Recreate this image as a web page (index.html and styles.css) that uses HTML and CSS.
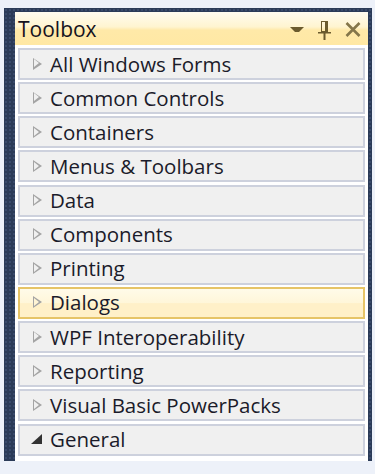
FILE: index.html
```html
<!DOCTYPE html>
<html lang="en">
<head>
    <meta charset="UTF-8">
    <meta name="viewport" content="width=device-width, initial-scale=1.0">
    <title>Toolbox</title>
    <link rel="stylesheet" href="styles.css">
</head>
<body>
    <div class="frame">
        <div class="panel">
            <div class="header">
                <span class="title">Toolbox</span>
                <div class="tools">
                    <svg class="icon-menu" width="14" height="6" viewBox="0 0 14 6">
                        <polygon points="0,0 14,0 9,5 5,5" fill="#6b5b2e"/>
                    </svg>
                    <svg class="icon-pin" width="13" height="19" viewBox="0 0 13 19">
                        <rect x="3.5" y="0.5" width="6" height="10" fill="none" stroke="#6b5b2e"/>
                        <rect x="7" y="1" width="2" height="10" fill="#6b5b2e"/>
                        <rect x="0" y="11" width="13" height="1.5" fill="#6b5b2e"/>
                        <rect x="5.5" y="12" width="2" height="7" fill="#6b5b2e"/>
                    </svg>
                    <svg class="icon-close" width="16" height="15" viewBox="0 0 16 15">
                        <path d="M1.5 1 L14.5 14 M14.5 1 L1.5 14" stroke="#85764a" stroke-width="2.6"/>
                    </svg>
                </div>
            </div>

            <ul class="groups">
                <li class="group"><span class="arrow"></span>All Windows Forms</li>
                <li class="group"><span class="arrow"></span>Common Controls</li>
                <li class="group"><span class="arrow"></span>Containers</li>
                <li class="group"><span class="arrow"></span>Menus &amp; Toolbars</li>
                <li class="group"><span class="arrow"></span>Data</li>
                <li class="group"><span class="arrow"></span>Components</li>
                <li class="group"><span class="arrow"></span>Printing</li>
                <li class="group group-hover"><span class="arrow"></span>Dialogs</li>
                <li class="group"><span class="arrow"></span>WPF Interoperability</li>
                <li class="group"><span class="arrow"></span>Reporting</li>
                <li class="group"><span class="arrow"></span>Visual Basic PowerPacks</li>
                <li class="group"><span class="arrow arrow-open"></span>General</li>
            </ul>
        </div>
    </div>
</body>
</html>
```

FILE: styles.css
```css
body {
    margin: 0;
    background-color: #edf1f9;
    font-family: "Open Sans", "Noto Sans", Arial, sans-serif;
    color: #1b1b2a;
}
.frame {
    margin: 8px 0 0 4px;
    width: 353px;
    padding: 4px 4px 0 11px;
    background-color: #2b3b58;
    background-image: radial-gradient(circle, #3a4b6c 0.8px, transparent 1px);
    background-size: 4px 4px;
}
.panel {
    height: 449px;
    background-color: white;
}
.header {
    height: 33px;
    display: flex;
    align-items: center;
    justify-content: space-between;
    padding: 0 7px 0 3px;
    background: linear-gradient(#fffcf0 0%, #fff4d0 45%, #ffe9a8 55%, #ffe8a4 100%);
}
.title {
    font-size: 21px;
    color: #14121e;
}
.tools {
    display: flex;
    align-items: center;
    gap: 14px;
}
.icon-menu {
    margin-top: 2px;
}
.icon-pin {
    margin-top: 3px;
}
.icon-close {
    margin-top: 1px;
}
.groups {
    list-style: none;
    margin: 0;
    padding: 3px 3px 0 3px;
    display: grid;
    gap: 2.15px;
}
.group {
    height: 27px;
    padding-bottom: 1px;
    display: flex;
    align-items: center;
    border: 2px solid #cdd1dd;
    background-color: #f0f0f0;
    font-size: 20.5px;
    line-height: 26px;
}
.group-hover {
    border-color: #e6c467;
    background: linear-gradient(#fffbe9 0%, #fff6d9 50%, #fff0c8 52%, #fff0c8 100%);
}
.arrow {
    width: 0;
    height: 0;
    margin: 0 8px 0 13px;
    border-style: solid;
    border-width: 6.5px 0 6.5px 9px;
    border-color: transparent transparent transparent #a4a4a4;
    position: relative;
}
.arrow::after {
    content: "";
    position: absolute;
    left: -7.6px;
    top: -4.2px;
    border-style: solid;
    border-width: 4.2px 0 4.2px 5.6px;
    border-color: transparent transparent transparent #f0f0f0;
}
.group-hover .arrow::after {
    border-left-color: #fff4d4;
}
.arrow-open {
    margin: 0 8px 0 11px;
    border-width: 0 0 10px 11px;
    border-color: transparent transparent #333 transparent;
}
.arrow-open::after {
    display: none;
}
```
